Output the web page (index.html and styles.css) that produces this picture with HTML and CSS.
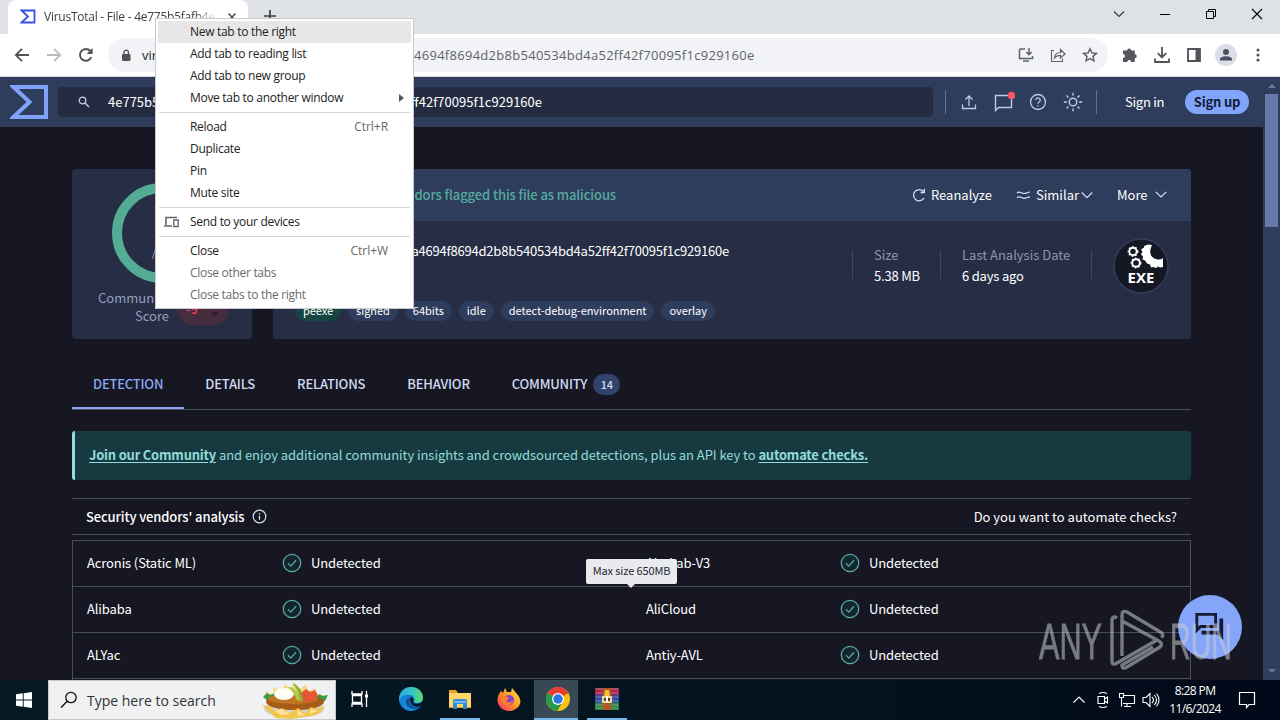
FILE: index.html
```html
<!DOCTYPE html>
<html lang="en">
<head>
<meta charset="utf-8">
<title>VirusTotal - File</title>
<link rel="stylesheet" href="styles.css">
</head>
<body>
<div class="desktop">
  <div class="tabstrip">
    <div class="tab">
      <svg class="favicon" width="16" height="16" viewBox="0 0 16 16"><path d="M1.500 1.500H14.500V13.500H1.500L8 7.500Z" fill="none" stroke="#3550e8" stroke-width="1.800"/></svg>
      <span class="tab-title">VirusTotal - File - 4e775b5fafb4ea4694</span>
      <svg class="tab-close" width="10" height="10" viewBox="0 0 10 10"><path d="M1.500 1.500l7 7M8.500 1.500l-7 7" stroke="#45484c" stroke-width="1.500"/></svg>
    </div>
    <svg class="newtab" width="14" height="14" viewBox="0 0 14 14"><path d="M7 1v12M1 7h12" stroke="#3c4043" stroke-width="1.700"/></svg>
    <div class="winbtns">
      <svg width="12" height="12" viewBox="0 0 12 12"><path d="M1 3.500l5 5 5-5" fill="none" stroke="#333" stroke-width="1.100"/></svg>
      <svg width="12" height="12" viewBox="0 0 12 12"><path d="M1 6.500h10" stroke="#000"/></svg>
      <svg width="12" height="12" viewBox="0 0 12 12"><path d="M1.500 3.500h7v7h-7zM3.500 3.500v-2h7v7h-2" fill="none" stroke="#000"/></svg>
      <svg width="12" height="12" viewBox="0 0 12 12"><path d="M1 1l10 10M11 1L1 11" stroke="#000" stroke-width="1.100"/></svg>
    </div>
  </div>

  <div class="toolbar">
    <div class="navs">
      <svg width="16" height="16" viewBox="0 0 16 16"><path d="M15 8H2M8 1.800L1.800 8 8 14.200" fill="none" stroke="#505357" stroke-width="1.800"/></svg>
      <svg width="16" height="16" viewBox="0 0 16 16"><path d="M1 8h13M8 1.800L14.200 8 8 14.200" fill="none" stroke="#babcbe" stroke-width="1.800"/></svg>
      <svg width="16" height="16" viewBox="0 0 16 16"><path d="M13.300 10.200A5.900 5.900 0 1 1 12.300 4" fill="none" stroke="#505357" stroke-width="1.900"/><path d="M14.600 1v6h-6z" fill="#505357"/></svg>
    </div>
    <div class="omnibox">
      <svg class="lock" width="10" height="13" viewBox="0 0 10 13"><rect x="1" y="5" width="8.500" height="7" rx="1" fill="#505357"/><path d="M3 5V3.300a2.200 2.200 0 0 1 4.400 0V5" fill="none" stroke="#505357" stroke-width="1.400"/></svg>
      <span class="host">virustotal</span>
      <span class="path">4694f8694d2b8b540534bd4a52ff42f70095f1c929160e</span>
      <svg class="install" width="16" height="16" viewBox="0 0 16 16"><path d="M7 2H2.500a1 1 0 0 0-1 1v8.500h13V9M5 14h6" fill="none" stroke="#5f6368" stroke-width="1.500"/><path d="M11 1v6M8.300 5L11 7.700 13.700 5" fill="none" stroke="#5f6368" stroke-width="1.500"/></svg>
      <svg width="16" height="16" viewBox="0 0 16 16"><path d="M4 3.500H1.500v11h11V11.500M4.500 11c.3-3.500 2.400-5.500 6-5.500V2.500L15 7l-4.500 4V8.300C7.500 8.300 6 9 4.500 11z" fill="none" stroke="#5f6368" stroke-width="1.200"/></svg>
      <svg width="16" height="16" viewBox="0 0 16 16"><path d="M8 1.800l1.900 4.100 4.500.5L11 9.400l.9 4.400L8 11.600l-3.900 2.200.9-4.400L1.600 6.400l4.500-.5z" fill="none" stroke="#5f6368" stroke-width="1.500"/></svg>
    </div>
    <div class="actions">
      <svg width="16" height="16" viewBox="0 0 16 16"><path d="M1 3.500h4.200a2 2 0 1 1 4 0h3.600v3.700a2 2 0 1 1 0 4V15H9.200a2 2 0 0 0-4 0H1v-4a1.900 1.900 0 0 0 0-4z" fill="#55585d"/></svg>
      <svg width="18" height="18" viewBox="0 0 18 18"><path d="M9 1v10M4.800 7.200L9 11.400l4.200-4.200M2 12.500V16h14v-3.500" fill="none" stroke="#505357" stroke-width="1.800"/></svg>
      <svg width="16" height="16" viewBox="0 0 16 16"><path d="M2 2h12v12H2z" fill="none" stroke="#505357" stroke-width="1.800"/><path d="M9.500 2H14v12H9.500z" fill="#505357"/></svg>
      <svg class="avatar" width="22" height="22" viewBox="0 0 22 22"><circle cx="11" cy="11" r="11" fill="#dbdee6"/><circle cx="11" cy="8" r="3" fill="#4b4f63"/><path d="M5 16.500v-1.300c0-4 12-4 12 0v1.300z" fill="#4b4f63"/></svg>
      <svg class="dots" width="4" height="16" viewBox="0 0 4 16"><circle cx="2" cy="3" r="1.600" fill="#55585d"/><circle cx="2" cy="8" r="1.600" fill="#55585d"/><circle cx="2" cy="13" r="1.600" fill="#55585d"/></svg>
    </div>
  </div>

  <div class="viewport">
    <div class="page">
      <header class="vt-header">
        <svg class="vt-logo" width="38" height="34" viewBox="0 0 38 34"><path d="M3.500 2H36v30H3.500L19.500 17z" fill="none" stroke="#82a2f9" stroke-width="4"/></svg>
        <div class="search">
          <svg width="12" height="12" viewBox="0 0 12 12"><circle cx="4.500" cy="4.500" r="3.300" fill="none" stroke="#c8d3ee" stroke-width="1.200"/><path d="M7 7l4 4" stroke="#c8d3ee" stroke-width="1.300"/></svg>
          <span class="search-start">4e775b5fafb4e</span>
          <span class="search-end">ff42f70095f1c929160e</span>
        </div>
        <div class="tools">
          <svg width="16" height="16" viewBox="0 0 16 16"><path d="M8 12V2M4.500 5.500L8 2l3.500 3.500M1.500 10.500v4h13v-4" fill="none" stroke="#b9ccf3" stroke-width="1.300"/></svg>
          <svg class="chat" width="22" height="22" viewBox="0 0 22 22"><path d="M2.500 5.500h16v12h-13l-3 3z" fill="none" stroke="#b9ccf3" stroke-width="1.400"/><circle cx="18.500" cy="5.500" r="3.800" fill="#fa5560"/></svg>
          <svg width="18" height="18" viewBox="0 0 18 18"><circle cx="9" cy="9" r="7.500" fill="none" stroke="#b9ccf3" stroke-width="1.300"/><path d="M6.800 7a2.200 2.200 0 1 1 3.300 2c-.8.500-1.100.8-1.100 1.700M9 12.200v1.400" fill="none" stroke="#b9ccf3" stroke-width="1.300"/></svg>
          <svg class="sun" width="20" height="20" viewBox="0 0 20 20"><circle cx="10" cy="10" r="3.800" fill="none" stroke="#b9ccf3" stroke-width="1.400"/><path d="M10 .8v3M10 16.200v3M.8 10h3M16.200 10h3M3.500 3.500l2 2M14.500 14.500l2 2M16.500 3.500l-2 2M3.500 16.500l2-2" stroke="#b9ccf3" stroke-width="1.300"/></svg>
        </div>
        <span class="signin">Sign in</span>
        <span class="signup">Sign up</span>
      </header>

      <main class="content">
        <div class="summary">
          <section class="score">
            <div class="ring"><span>/ 66</span></div>
            <div class="community"><span class="community-label">Community<br>Score</span><span class="vote"><b>-9</b><svg width="10" height="6" viewBox="0 0 10 6"><path d="M1 0h8L5 5z" fill="#2a2138"/></svg></span></div>
          </section>
          <section class="file">
            <div class="file-head">
              <span class="flagged">No security vendors flagged this file as malicious</span>
              <svg width="14" height="14" viewBox="0 0 14 14"><path d="M12 10A5.600 5.600 0 1 1 11.300 3.400M12.300.8v3.700H8.600" fill="none" stroke="#d3dffa" stroke-width="1.300"/></svg>
              <span class="reanalyze">Reanalyze</span>
              <svg width="15" height="10" viewBox="0 0 15 10"><path d="M1 3.200c2-3 4.500.3 7 .3s4-1.500 6-1.500M1 8c2-3 4.500.3 7 .3S12 6.800 14 6.800" fill="none" stroke="#d3dffa" stroke-width="1.200"/></svg>
              <span class="similar">Similar</span>
              <svg width="12" height="8" viewBox="0 0 12 8"><path d="M.8 1.500L6 6.700l5.200-5.200" fill="none" stroke="#d3dffa" stroke-width="1.200"/></svg>
              <span class="more">More</span>
              <svg width="12" height="8" viewBox="0 0 12 8"><path d="M.8.8L6 6l5.200-5.200" fill="none" stroke="#d3dffa" stroke-width="1.200"/></svg>
            </div>
            <div class="file-body">
              <div class="file-info">
                <span class="hash">a4694f8694d2b8b540534bd4a52ff42f70095f1c929160e</span>
                <div class="tags"><span class="green">peexe</span><span>signed</span><span>64bits</span><span>idle</span><span>detect-debug-environment</span><span>overlay</span></div>
              </div>
              <dl class="size"><dt>Size</dt><dd>5.38 MB</dd></dl>
              <dl class="date"><dt>Last Analysis Date</dt><dd>6 days ago</dd></dl>
              <div class="kind">
                <svg width="56" height="56" viewBox="0 0 56 56"><circle cx="28" cy="28" r="27" fill="#151723" stroke="#333e5c" stroke-width="1.500"/><g fill="none" stroke="#fff"><circle cx="20" cy="13.500" r="3.700" stroke-width="2"/><circle cx="23" cy="25" r="3.800" stroke-width="2"/><g stroke-width="1.200" stroke-dasharray="1.600 1.900"><circle cx="20" cy="13.500" r="4.800"/><circle cx="23" cy="25" r="4.800"/></g></g><path d="M31 8l4-1.500 4 .5q-5 11 4 14 4 1.500 7-1v9l-3 .5-2-1-2 1.500-3-1-2 .5-1-3-3-1-2-3-2.500-1 .5-3-2-2 1.500-3-1.500-2 3-2z" fill="#fff"/></svg>
                <span class="exe">EXE</span>
              </div>
            </div>
          </section>
        </div>

        <nav class="tabs">
          <span class="active">DETECTION</span><span>DETAILS</span><span>RELATIONS</span><span>BEHAVIOR</span><span>COMMUNITY</span><i>14</i>
        </nav>

        <div class="banner"><p><b>Join our Community</b> and enjoy additional community insights and crowdsourced detections, plus an API key to <b>automate checks.</b></p></div>

        <div class="vendors-head">
          <span class="vh-title">Security vendors' analysis</span>
          <svg width="15" height="15" viewBox="0 0 15 15"><circle cx="7.500" cy="7.500" r="6.300" fill="none" stroke="#d7deee" stroke-width="1.200"/><path d="M7.500 6.700v4M7.500 4v1.400" stroke="#d7deee" stroke-width="1.300"/></svg>
          <span class="vh-question">Do you want to automate checks?</span>
        </div>

        <div class="table">
          <div class="row"><span class="vendor">Acronis (Static ML)</span><svg class="check"><use href="#ok"/></svg><span class="verdict">Undetected</span><span class="vendor">AhnLab-V3</span><svg class="check"><use href="#ok"/></svg><span class="verdict">Undetected</span></div>
          <div class="row"><span class="vendor">Alibaba</span><svg class="check"><use href="#ok"/></svg><span class="verdict">Undetected</span><span class="vendor">AliCloud</span><svg class="check"><use href="#ok"/></svg><span class="verdict">Undetected</span></div>
          <div class="row"><span class="vendor">ALYac</span><svg class="check"><use href="#ok"/></svg><span class="verdict">Undetected</span><span class="vendor">Antiy-AVL</span><svg class="check"><use href="#ok"/></svg><span class="verdict">Undetected</span></div>
        </div>
      </main>
    </div>
    <div class="scrollbar"><i class="up"></i><div class="thumb"></div><i class="down"></i></div>
  </div>

  <div class="taskbar">
    <div class="start"><svg width="16" height="16" viewBox="0 0 16 16"><path d="M0 2.300L6.800 1.300V7.500H0zM7.700 1.200L16 0v7.500H7.700zM0 8.500h6.800v6.200L0 13.700zM7.700 8.500H16V16L7.700 14.800z" fill="#fff"/></svg></div>
    <div class="tsearch">
      <svg width="18" height="18" viewBox="0 0 18 18"><circle cx="11" cy="6.500" r="5.200" fill="none" stroke="#111" stroke-width="1.300"/><path d="M7.200 10.300L1 16.500" stroke="#111" stroke-width="1.400"/></svg>
      <span>Type here to search</span>
      <svg class="food" width="70" height="38" viewBox="0 0 70 38"><ellipse cx="34" cy="28" rx="30" ry="9" fill="#cfd5dc"/><path d="M9 20L5 10l9 4-1-8 9 4 3-7 6 6 3-8 6 7 6-5 2 7 8-3-1 8 9-1-5 9z" fill="#f4d984"/><path d="M3 16l4-4 3 2 5-2 1 6-6 4zM55 16l5-3 2 2 6-1-3 6-7 2z" fill="#3e9a45"/><ellipse cx="35" cy="21" rx="29" ry="8" fill="#a85b15"/><ellipse cx="33" cy="18" rx="25" ry="5" fill="#bf7620"/><ellipse cx="24" cy="13" rx="10" ry="6" fill="#fffdf4"/><path d="M27 6q10-1 15 14l-5-1Q33 9 27 6z" fill="#b5cb43"/><path d="M32 2q10 3 12 17l-4 0Q39 9 32 2z" fill="#8aae38"/><path d="M41 12l5-4 4 3 5-2 3 5-5 6-9 1z" fill="#e65834"/><path d="M2 24l9 2 4 4 7-3 8 5 8-5 7 5 6-6 7 2 8-4-6 8-8 3-9 1-12 2-15-1L9 31z" fill="#f4c54c"/><path d="M15 30l7-2 8 5-9 1zM38 29l7 5-8 1zM51 28l7 2-8 3z" fill="#ffe29b"/></svg>
    </div>
    <div class="app task-view"><svg width="20" height="18" viewBox="0 0 20 18"><path d="M2 1v3h10V1M2 17v-3h10v3M2.500 5.500h9v7h-9zM16.500 1v16" fill="none" stroke="#fff" stroke-width="1.300"/><path d="M15 4.500h3v3h-3z" fill="#fff"/></svg></div>
    <div class="app"><svg width="26" height="26" viewBox="0 0 26 26"><defs><linearGradient id="eg" x1="0" x2="1"><stop offset="0" stop-color="#2ba8e6"/><stop offset=".6" stop-color="#35c9bd"/><stop offset="1" stop-color="#65d862"/></linearGradient></defs><circle cx="13" cy="13" r="12" fill="#1475c8"/><path d="M1.200 11C2.500 4 8 1 13 1c7 0 12 5 12 10.500 0 5-5.500 7-9.500 4.500 2-1.500 1.500-6.500-3.500-7C6.500 8.500 2.500 10 1.200 16z" fill="url(#eg)"/><path d="M9 11c-4 6 1 12 9 12-7 5-16-2-16-9 1-3 4-4 7-3z" fill="#1589d8"/><path d="M12 13c-3 6 4 10 11 6-5 7-16 3-15-4 .5-2 2-3 4-2z" fill="#105097"/><path d="M12 13c1-4 5 0 3 3 2 3 7 2 10-1l0 3-3 2c-6 2-10-2-10-7z" fill="#061826"/></svg></div>
    <div class="app open"><svg width="22" height="20" viewBox="0 0 22 20"><path d="M0 1h7l2 3h13v15H0z" fill="#e8a126"/><path d="M0 4h22v14H0z" fill="#ffd668"/><path d="M4 12q0-2 2-2h10q2 0 2 2v8h-4v-5H8v5H4z" fill="#2f8bd3"/><path d="M5 12h12v2H5z" fill="#70baf0"/></svg></div>
    <div class="app"><svg width="24" height="24" viewBox="0 0 24 24"><defs><linearGradient id="fg" x1="1" y1="0" x2="0" y2="1"><stop offset="0" stop-color="#ffe840"/><stop offset=".5" stop-color="#ff9225"/><stop offset="1" stop-color="#f22571"/></linearGradient></defs><path d="M2 7l2-3 2 2 2-5 2 4 4 0 1-4 5 6c9 10-2 18-9 17C2 23-2 14 2 7z" fill="url(#fg)"/><circle cx="12" cy="13" r="5" fill="#8345cf"/><path d="M4 10c2-3 5-1 6 0 2 0 3 1 0 3-2 1 0 4 6 1-2 6-11 5-12-1z" fill="#ff7d28"/></svg></div>
    <div class="app open current"><svg width="24" height="24" viewBox="0 0 24 24"><circle cx="12" cy="12" r="12" fill="#fbc116"/><path d="M12 12L1.600 6A12 12 0 0 0 11 24l6-9z" fill="#259b4b"/><path d="M12 12L1.600 6A12 12 0 0 1 22.400 6z" fill="#e83c32"/><circle cx="12" cy="12" r="6" fill="#fff"/><circle cx="12" cy="12" r="4.700" fill="#2878e4"/></svg></div>
    <div class="app open winrar"><svg width="24" height="24" viewBox="0 0 24 24"><path d="M0 1h24v7H0z" fill="#a82848"/><path d="M0 8h24v8H0z" fill="#314ba5"/><path d="M0 16h24v7H0z" fill="#278a42"/><path d="M1 2h22M1 6h22M1 10h22M1 14h22M1 18h22M1 21h22" stroke="#b39aa6" stroke-width=".7"/><path d="M8 1h8v22H8z" fill="#b55624"/><path d="M10 3h4l1 6h-6z" fill="#f0bd35"/><path d="M7 9h10v7H7z" fill="#e8d9a1"/><path d="M9 11h6v3H9z" fill="#523c2a"/><path d="M11 9h2v6h-2z" fill="#fff"/></svg></div>
    <div class="tray">
      <svg width="14" height="14" viewBox="0 0 14 14"><path d="M1.500 9.500L7 4l5.500 5.500" fill="none" stroke="#fff" stroke-width="1.200"/></svg>
      <svg class="camera" width="14" height="18" viewBox="0 0 14 18"><path d="M2 5.500h6.500v7H2zM8.500 8l3-2v6l-3-2M3 2.500q4-2 8 0M3 15.500q4 2 8 0" fill="none" stroke="#fff" stroke-width="1.100"/></svg>
      <svg class="network" width="18" height="16" viewBox="0 0 18 16"><path d="M5 3.500h11.500v8H5M9 11.500v3M6 14.500h7M1.500 1.500h4v4h-4zM3.500 5.500v9" fill="none" stroke="#fff" stroke-width="1.100"/></svg>
      <svg class="volume" width="18" height="16" viewBox="0 0 18 16"><path d="M1 5.500h3l4-4v13l-4-4H1zM10 5q3 3 0 6M12.300 3q4.500 5 0 10M14.500 1.500q5 6.500 0 13" fill="none" stroke="#fff" stroke-width="1.100"/></svg>
      <div class="clock"><span>8:28 PM</span><span>11/6/2024</span></div>
      <svg width="18" height="18" viewBox="0 0 18 18"><path d="M1.500 1.500h15v12H11l-2.500 3V13.500h-7z" fill="none" stroke="#fff" stroke-width="1.200"/></svg>
    </div>
  </div>

  <div class="tooltip">Max size 650MB</div>
  <div class="chat-fab"><svg width="32" height="32" viewBox="0 0 34 32"><path d="M3 2.500h20v13H7l-4 4z" fill="none" stroke="#151b30" stroke-width="3"/><path d="M27 7h4v23l-6-6H8v-4h19z" fill="#151b30"/></svg></div>
  <div class="watermark">
    <svg width="192" height="64" viewBox="0 0 192 64"><g font-family="Liberation Sans, sans-serif" font-size="50" fill="#c9ccd1" stroke="#c9ccd1" stroke-width=".8"><text x="0" y="50" textLength="63" lengthAdjust="spacingAndGlyphs">ANY</text><text x="131" y="50" textLength="62" lengthAdjust="spacingAndGlyphs">RUN</text></g><path d="M78 9q-5-3-5 3v40q0 5 5 2l40-23L83 12M83 47V6q0-5 5-3l35 21q2 3-1 4M118 31q7 3 3 7L88 58q-5 3-5-2l31-18" fill="none" stroke="#c9ccd1" stroke-width="3.400" stroke-linejoin="round"/></svg>
  </div>

  <div class="menu">
    <div class="item hover"><span>New tab to the right</span></div>
    <div class="item"><span>Add tab to reading list</span></div>
    <div class="item"><span>Add tab to new group</span></div>
    <div class="item"><span>Move tab to another window</span><i class="arrow"></i></div>
    <hr>
    <div class="item"><span>Reload</span><kbd>Ctrl+R</kbd></div>
    <div class="item"><span>Duplicate</span></div>
    <div class="item"><span>Pin</span></div>
    <div class="item"><span>Mute site</span></div>
    <hr>
    <div class="item device"><svg width="17" height="12" viewBox="0 0 17 12"><path d="M3 9V1.500h11M1 10h8" fill="none" stroke="#666" stroke-width="1.600"/><path d="M10.800 4h4.400v6.500h-4.400z" fill="none" stroke="#666" stroke-width="1.300"/></svg><span>Send to your devices</span></div>
    <hr>
    <div class="item"><span>Close</span><kbd>Ctrl+W</kbd></div>
    <div class="item off"><span>Close other tabs</span></div>
    <div class="item off"><span>Close tabs to the right</span></div>
  </div>
</div>
<svg class="defs" width="0" height="0"><symbol id="ok" viewBox="0 0 20 20"><circle cx="10" cy="10" r="8.700" fill="#14252f" stroke="#57aa9c" stroke-width="1.300"/><path d="M6 10.300l2.800 2.800L14 7.200" fill="none" stroke="#57aa9c" stroke-width="1.300"/></symbol></svg>
</body>
</html>
```
FILE: styles.css
```css
* { box-sizing: border-box; }
body { margin: 0; overflow: hidden; font-family: "Noto Sans CJK JP", "Noto Sans", sans-serif; font-size: 13px; line-height: 20px; color: #fff; }
svg { display: block; flex: none; }
span { white-space: nowrap; }
.defs { position: absolute; }
.desktop { position: relative; width: 1280px; height: 720px; display: flex; flex-direction: column; overflow: hidden; background: #161723; }

/* Browser frame */
.tabstrip { height: 34px; flex: none; display: flex; align-items: flex-start; background: #dee1e6; color: #3c4043; font-family: "Open Sans", sans-serif; }
.tab { width: 240px; height: 34px; margin-left: 8px; padding: 0 11px 1px 12px; display: flex; align-items: center; background: #fff; border-radius: 8px 8px 0 0; }
.tab-title { width: 172px; margin-left: 8px; overflow: hidden; font-size: 12px; letter-spacing: -.25px; -webkit-mask-image: linear-gradient(90deg, #000 150px, transparent 172px); }
.tab-close { margin-left: auto; }
.newtab { margin: 9px 0 0 15px; }
.winbtns { margin: 8px 17px 0 auto; display: flex; gap: 34px; }
.toolbar { height: 43px; flex: none; display: flex; align-items: center; background: #fff; border-bottom: 1px solid #d6d8dc; color: #5f6368; font-family: "Open Sans", sans-serif; }
.navs { display: flex; gap: 16px; margin-left: 14px; }
.omnibox { width: 1000px; height: 34px; margin-left: 14px; padding: 0 10px 0 13px; display: flex; align-items: center; background: #f1f3f6; border-radius: 17px; }
.host { width: 60px; margin-left: 11px; color: #202124; font-size: 13px; }
.path { margin-left: 212px; width: 342px; font-size: 13px; letter-spacing: .28px; }
.install { margin-left: auto; }
.omnibox svg + svg { margin-left: 16px; }
.actions { display: flex; align-items: center; gap: 15px; margin: 0 20px 0 auto; }
.avatar { margin-left: -2px; }
.dots { margin-left: 4px; }

/* Web page */
.viewport { flex: 1; min-height: 0; display: flex; }
.page { width: 1263px; overflow: hidden; }
.scrollbar { width: 17px; padding: 7px 2px; display: flex; flex-direction: column; align-items: center; background: #2f3d5c; }
.scrollbar i { border: 4px solid transparent; }
.scrollbar .up { border-top-width: 0; border-bottom-color: #69779c; }
.scrollbar .down { margin-top: auto; border-bottom-width: 0; border-top-color: #69779c; }
.thumb { width: 13px; height: 133px; margin-top: 6px; background: #6879ab; }
.vt-header { height: 50px; display: flex; align-items: center; padding-left: 10px; background: #2f3d5c; }
.search { width: 875px; height: 30px; margin-left: 10px; padding-left: 20px; display: flex; align-items: center; background: #252c42; border-radius: 4px; }
.search-start { margin-left: 18px; width: 90px; }
.search-end { margin-left: 204px; width: 140px; text-align: right; }
.tools { height: 24px; margin-left: 12px; padding: 0 13px 0 15px; display: flex; align-items: center; gap: 15px; border: solid #657291; border-width: 0 1px; }
.chat { margin: 0 -1px 3px 1px; }
.sun { margin-left: 1px; }
.signin { width: 39px; margin-left: 28px; letter-spacing: -.25px; }
.signup { width: 64px; height: 24px; margin-left: 21px; line-height: 24px; text-align: center; border-radius: 12px; background: #82a5fc; color: #151b33; font-weight: 700; letter-spacing: -.2px; }
.content { padding: 42px 0 0 72px; width: 1191px; }
.summary { display: flex; gap: 21px; height: 170px; }
.score { width: 180px; border-radius: 4px; background: #262d44; overflow: hidden; }
.ring { width: 100px; height: 100px; margin: 14px auto 0; border: 10px solid #53ad95; border-radius: 50%; display: flex; justify-content: center; padding-top: 49px; color: #9aa6c2; font-size: 12px; line-height: 20px; }
.community { display: flex; align-items: flex-end; gap: 8px; margin-top: 6px; padding-left: 26px; }
.community-label { width: 71px; text-align: right; line-height: 18px; color: #949fbe; }
.vote { width: 52px; height: 32px; margin-bottom: 0; padding-bottom: 1px; border-radius: 16px; background: #472c3f; display: flex; align-items: center; justify-content: center; gap: 12px; color: #ed3c5b; }
.vote b { font-weight: 500; }
.vote svg { margin-top: 12px; }
.file { width: 918px; border-radius: 4px; background: #262d44; overflow: hidden; }
.file-head { height: 52px; padding-right: 24px; display: flex; align-items: center; background: #2f3d5c; border-bottom: 1px solid #35405e; }
.flagged { width: 321px; margin-left: 22px; text-align: right; color: #55aaa1; font-weight: 500; letter-spacing: -.1px; }
.file-head svg { margin-left: auto; }
.reanalyze { margin-left: 5px; width: 61px; }
.file-head .reanalyze + svg { margin-left: 24px; }
.similar { width: 42px; margin-left: 5px; }
.file-head .similar + svg { margin-left: 3px; }
.more { width: 30px; margin-left: 24px; }
.file-head .more + svg { margin-left: 8px; }
.file-body { height: 118px; display: flex; }
.file-info { width: 579px; display: flex; flex-direction: column; }
.hash { width: 456px; margin-top: 20px; text-align: right; letter-spacing: -.22px; }
.tags { display: flex; gap: 7px; margin: 40px 0 0 22px; font-size: 11px; letter-spacing: -.04px; }
.tags span { height: 20px; padding: 0 8px; border-radius: 10px; background: #2f3d5c; line-height: 19px; }
.tags .green { background: #174541; }
dl { margin: 29px 0 0; height: 29px; border-left: 1px solid #3b4869; padding-left: 21px; color: #8a96b6; }
.size { width: 88px; }
.date { width: 151px; }
dt { margin-top: -6px; line-height: 21px; }
dd { margin: 0; color: #fff; line-height: 21px; white-space: nowrap; letter-spacing: -.2px; }
.kind { position: relative; height: 29px; margin-top: 29px; padding-left: 21px; border-left: 1px solid #3b4869; }
.kind svg { margin-top: -12px; }
.exe { position: absolute; left: 21px; top: 18px; width: 56px; text-align: center; font: 700 15px/18px "Open Sans", sans-serif; }
.tabs { height: 50px; margin-top: 21px; display: flex; align-items: flex-start; border-bottom: 1px solid #494e5f; font-weight: 500; color: #d1daf1; font-size: 13px; letter-spacing: -.2px; }
.tabs span { height: 49px; padding: 0 21px; line-height: 48px; }
.tabs .active { color: #8ba8f5; border-bottom: 2px solid #8ba8f5; }
.tabs i { width: 27px; height: 21px; margin: 14px 0 0 -15px; line-height: 21px; text-align: center; border-radius: 11px; background: #33426a; font-style: normal; font-size: 11px; }
.banner { height: 49px; margin-top: 21px; padding-left: 14px; background: #173a40; border-left: 3px solid #8ee0df; border-radius: 3px; color: #91dcd9; line-height: 48px; letter-spacing: -.06px; }
.banner p { margin: 0; white-space: nowrap; }
.banner b { text-decoration: underline; text-underline-offset: 2px; letter-spacing: -.22px; }
.vendors-head { height: 37px; margin-top: 18px; padding: 0 14px; display: flex; align-items: center; gap: 8px; border: solid #494e5f; border-width: 1px 0; font-weight: 500; }
.vh-title { letter-spacing: -.12px; }
.vh-question { margin-left: auto; font-weight: 400; }
.table { height: 200px; margin-top: 5px; border: 1px solid #494e5f; }
.row { height: 46px; display: grid; grid-template-columns: 195px 29px 335px 194px 29px 1fr; padding-left: 14px; align-items: center; border-bottom: 1px solid #494e5f; letter-spacing: -.12px; }
.row span { padding-bottom: 2px; }
.check { width: 20px; height: 20px; margin-bottom: 2px; }

/* Taskbar */
.taskbar { height: 40px; flex: none; display: flex; background: linear-gradient(90deg, #061923, #03131f 65%, #020819); }
.start { width: 48px; display: flex; align-items: center; justify-content: center; }
.tsearch { width: 288px; display: flex; align-items: center; padding: 0 5px 0 11px; background: #f0f1f3; border: 1px solid #c7cacc; color: #333; font: 14px/20px "Open Sans", sans-serif; }
.tsearch span { margin-left: 9px; padding-top: 1px; }
.food { margin-left: auto; }
.app { width: 40px; margin-right: 9px; display: flex; align-items: center; justify-content: center; border-bottom: 2px solid transparent; }
.task-view { margin-left: 4px; margin-right: 11px; }
.open { border-bottom-color: #76b9ed; }
.current { width: 44px; margin: 0 9px 0 -4px; padding-left: 4px; background: #364954; }
.tray { margin-left: auto; padding-right: 24px; display: flex; align-items: center; font-family: "Open Sans", sans-serif; }
.camera { margin-left: 10px; }
.network { margin-left: 8px; }
.volume { margin-left: 6px; }
.clock { width: 52px; margin: 0 17px 0 9px; display: flex; flex-direction: column; align-items: center; font-size: 12px; line-height: 18px; letter-spacing: -.6px; }

/* Floating layers */
.tooltip { position: absolute; left: 586px; top: 559px; width: 91px; height: 25px; border-radius: 2px; background: #e9eaed; color: #252837; text-align: center; font-size: 11px; line-height: 23px; white-space: nowrap; letter-spacing: -.12px; }
.tooltip::after { content: ""; position: absolute; left: 41px; top: 25px; border: 4px solid transparent; border-top-color: #e9eaed; border-bottom-width: 0; }
.chat-fab { position: absolute; left: 1178px; top: 595px; width: 64px; height: 64px; padding: 16px; border-radius: 50%; background: #85a5fb; }
.watermark { position: absolute; left: 1039px; top: 609px; opacity: .55; }
.watermark svg { overflow: visible; }
.menu { position: absolute; left: 155px; top: 18px; width: 259px; height: 291px; padding: 2px; border: 1px solid #c8c9cb; background: #fff; color: #222; font: 12px/20px "Open Sans", sans-serif; letter-spacing: -.3px; }
.item { height: 22px; display: flex; align-items: center; padding: 0 23px 0 32px; }
.hover { background: #e7e7e7; }
.item kbd { margin-left: auto; font: inherit; color: #666; letter-spacing: -.05px; }
.off { color: #6b6b6b; }
.menu hr { height: 1px; margin: 3px 1px; border: 0; background: #d5d5d5; }
.arrow { margin: 0 -16px 0 auto; border: 4px solid transparent; border-left: 5px solid #555; border-right: 0; }
.device { padding-left: 5px; }
.device svg { margin-right: 10px; }
```
